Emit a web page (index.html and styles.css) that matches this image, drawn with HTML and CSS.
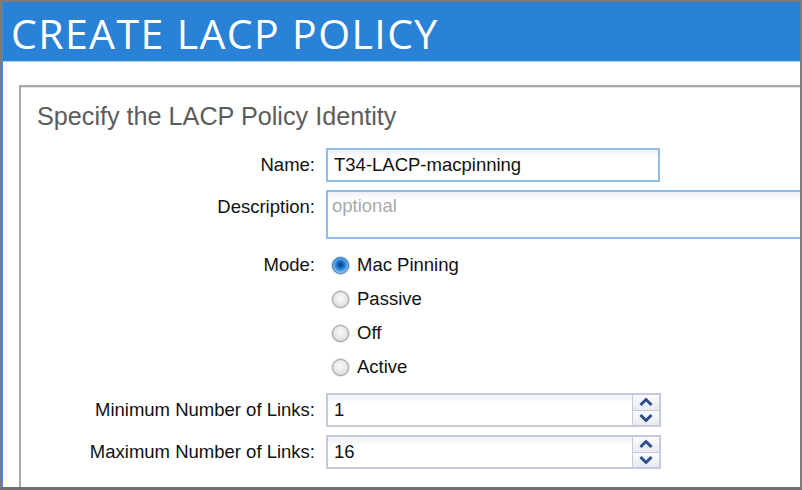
FILE: index.html
```html
<!DOCTYPE html>
<html>
<head>
<meta charset="utf-8">
<link rel="stylesheet" href="styles.css">
</head>
<body>
<div class="frame">
  <div class="inner">
    <div class="header"><h1 class="title">CREATE LACP POLICY</h1></div>
    <div class="content">
      <div class="panel">
        <div class="panel-title">Specify the LACP Policy Identity</div>
        <div class="form">
          <div class="label row-name">Name:</div>
          <div class="field row-name"><div class="text-input">T34-LACP-macpinning</div></div>

          <div class="label label-top row-desc">Description:</div>
          <div class="field row-desc"><div class="textarea"><span class="placeholder">optional</span></div></div>

          <div class="label label-mode">Mode:</div>
          <div class="field radios">
            <div class="radio-item"><span class="radio checked"></span><span>Mac Pinning</span></div>
            <div class="radio-item"><span class="radio"></span><span>Passive</span></div>
            <div class="radio-item"><span class="radio"></span><span>Off</span></div>
            <div class="radio-item"><span class="radio"></span><span>Active</span></div>
          </div>

          <div class="label row-min">Minimum Number of Links:</div>
          <div class="field row-min">
            <div class="spinner">
              <div class="spin-value">1</div>
              <div class="spin-buttons">
                <div class="spin-btn"><svg width="14" height="10" viewBox="0 0 14 10"><path d="M1.5 8 L7 2.5 L12.5 8" fill="none" stroke="#2b4d8c" stroke-width="3"/></svg></div>
                <div class="spin-btn"><svg width="14" height="10" viewBox="0 0 14 10"><path d="M1.5 2 L7 7.5 L12.5 2" fill="none" stroke="#2b4d8c" stroke-width="3"/></svg></div>
              </div>
            </div>
          </div>

          <div class="label row-max">Maximum Number of Links:</div>
          <div class="field row-max">
            <div class="spinner">
              <div class="spin-value">16</div>
              <div class="spin-buttons">
                <div class="spin-btn"><svg width="14" height="10" viewBox="0 0 14 10"><path d="M1.5 8 L7 2.5 L12.5 8" fill="none" stroke="#2b4d8c" stroke-width="3"/></svg></div>
                <div class="spin-btn"><svg width="14" height="10" viewBox="0 0 14 10"><path d="M1.5 2 L7 7.5 L12.5 2" fill="none" stroke="#2b4d8c" stroke-width="3"/></svg></div>
              </div>
            </div>
          </div>
        </div>
      </div>
    </div>
  </div>
</div>
</body>
</html>
```

FILE: styles.css
```css
html, body {
  margin: 0;
  padding: 0;
  background: #ffffff;
}

.frame {
  width: 802px;
  height: 490px;
  box-sizing: border-box;
  border-top: 2px solid #7b7b7b;
  border-right: 2px solid #7b7b7b;
  border-bottom: 3px solid #6f6f6f;
  border-left: 2px solid #7b7b7b;
  overflow: hidden;
}

.inner {
  height: 100%;
  border-left: 1px solid #3d8ddb;
  background: #ffffff;
  overflow: hidden;
}

.header {
  height: 59px;
  background: #2a82d6;
  border-bottom: 1px solid #a9cff3;
  padding-left: 8px;
}

.title {
  margin: 0;
  font-family: "Open Sans", "Noto Sans", sans-serif;
  font-weight: 400;
  font-size: 41px;
  letter-spacing: 1.4px;
  line-height: 59px;
  color: #ffffff;
  transform: translateY(2px);
}

.content {
  padding-top: 23px;
  padding-left: 16px;
}

.panel {
  width: 900px;
  height: 500px;
  border-top: 2px solid #a8a8a8;
  border-left: 2px solid #a8a8a8;
  box-shadow: inset 0 1px 0 #e4e4e4;
}

.panel-title {
  font-family: "Liberation Sans", Arial, sans-serif;
  font-size: 25.2px;
  line-height: 30px;
  color: #5c5c5c;
  padding-top: 14px;
  padding-left: 16px;
}

.form {
  margin-top: 17px;
  display: grid;
  grid-template-columns: 294px 1fr;
  column-gap: 11px;
  font-family: "Liberation Sans", Arial, sans-serif;
  font-size: 18.5px;
  color: #111111;
}

.label {
  text-align: right;
  display: flex;
  align-items: center;
  justify-content: flex-end;
  height: 34px;
}

.label-top {
  align-items: flex-start;
  padding-top: 6px;
  box-sizing: border-box;
}

.label-mode {
  margin-top: 9px;
}

.row-desc {
  margin-top: 8px;
}

.row-min {
  margin-top: 9px;
}

.row-max {
  margin-top: 8px;
}

.text-input {
  width: 334px;
  height: 34px;
  box-sizing: border-box;
  border: 2px solid #93bde8;
  background: linear-gradient(#eef0f6, #ffffff 8px);
  padding-left: 6px;
  display: flex;
  align-items: center;
}

.textarea {
  width: 520px;
  height: 49px;
  box-sizing: border-box;
  border: 2px solid #93bde8;
  border-right: none;
  background: linear-gradient(#eef0f6, #ffffff 8px);
  padding-left: 4px;
  padding-top: 3px;
}

.placeholder {
  color: #a9a9a9;
}

.radios {
  margin-top: 9px;
  display: flex;
  flex-direction: column;
}

.radio-item {
  height: 34px;
  display: flex;
  align-items: center;
  gap: 8px;
  padding-left: 6px;
}

.radio {
  width: 17px;
  height: 17px;
  box-sizing: border-box;
  border-radius: 50%;
  border: 1px solid #9a9a9a;
  background: radial-gradient(circle at 50% 40%, #fbfbfb 0%, #e6e6e6 55%, #cfcfcf 100%);
  box-shadow: 0 0 0 1px #e2e2e2;
}

.radio.checked {
  border: 1px solid #2f5f9a;
  background: radial-gradient(circle at 50% 45%, #0b3f7a 0%, #1d6fc4 32%, #5aaef0 60%, #d6e9fa 78%, #a9c9ea 100%);
  box-shadow: 0 0 0 1px #c9dcf0;
}

.spinner {
  width: 335px;
  height: 34px;
  box-sizing: border-box;
  border: 2px solid #c4c9dc;
  display: flex;
}

.spin-value {
  flex: 1;
  background: linear-gradient(#f1f2f7, #ffffff 10px);
  display: flex;
  align-items: center;
  padding-left: 6px;
}

.spin-buttons {
  width: 26px;
  border-left: 1px solid #c4c9dc;
  display: flex;
  flex-direction: column;
}

.spin-btn {
  flex: 1;
  display: flex;
  align-items: center;
  justify-content: center;
  background: linear-gradient(#fbfbfd, #e9eaf0);
}

.spin-btn + .spin-btn {
  border-top: 1px solid #c4c9dc;
}
```
